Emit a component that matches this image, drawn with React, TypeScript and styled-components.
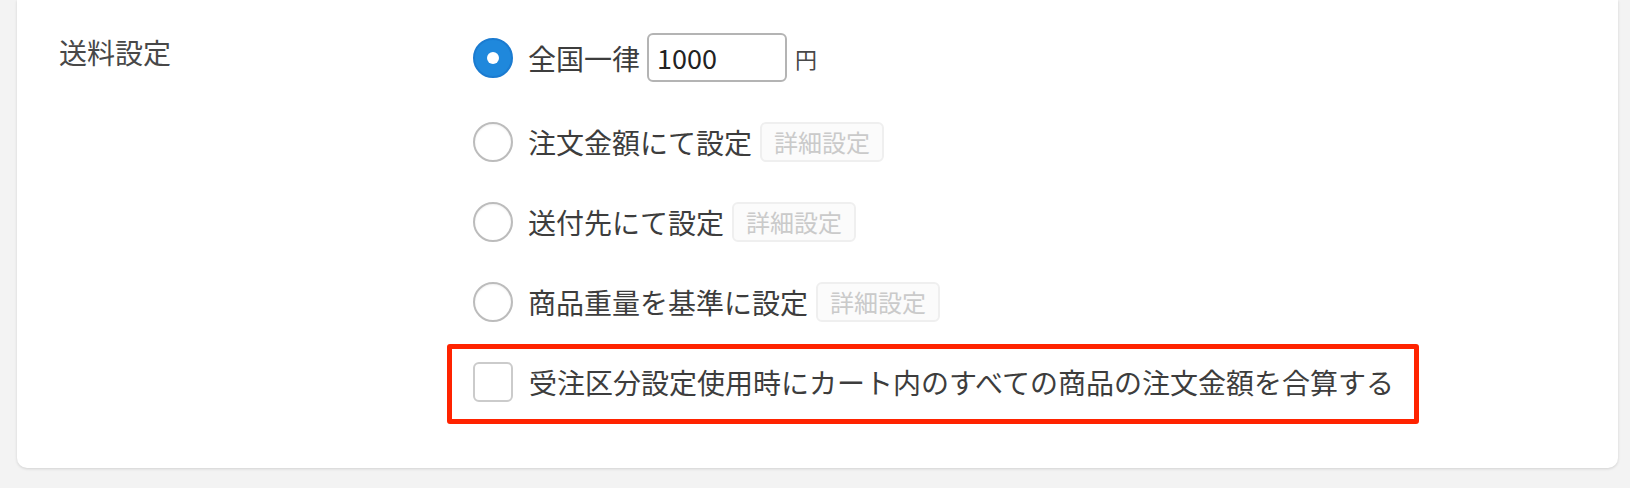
import React, {useState} from 'react';
import styled, {createGlobalStyle} from 'styled-components';

const GlobalStyle = createGlobalStyle`
  html, body {
    margin: 0;
    padding: 0;
    background: #f3f3f3;
  }
  body {
    font-family: "Noto Sans CJK JP", "Noto Sans", sans-serif;
    color: #3d3d3d;
  }
`;

type ShippingOption = {
  id: string;
  label: string;
  hasDetail: boolean;
};

const options: ShippingOption[] = [
  {id: 'flat', label: '全国一律', hasDetail: false},
  {id: 'amount', label: '注文金額にて設定', hasDetail: true},
  {id: 'destination', label: '送付先にて設定', hasDetail: true},
  {id: 'weight', label: '商品重量を基準に設定', hasDetail: true},
];

function App() {
  const [selected, setSelected] = useState<string>('flat');
  const [price, setPrice] = useState<string>('1000');
  const [combine, setCombine] = useState<boolean>(false);

  return (
    <>
      <GlobalStyle />
      <Page>
        <Card>
          <Label>送料設定</Label>
          <OptionList>
            {options.map((opt) => (
              <OptionRow key={opt.id} $tall={opt.id === 'flat'}>
                <Radio
                  $checked={selected === opt.id}
                  onClick={() => setSelected(opt.id)}
                />
                <OptionText onClick={() => setSelected(opt.id)}>
                  {opt.label}
                </OptionText>
                {opt.id === 'flat' && (
                  <>
                    <PriceInput
                      value={price}
                      onChange={(e) => setPrice(e.target.value)}
                    />
                    <Unit>円</Unit>
                  </>
                )}
                {opt.hasDetail && <DetailButton>詳細設定</DetailButton>}
              </OptionRow>
            ))}
            <CheckRow>
              <Checkbox $checked={combine} onClick={() => setCombine(!combine)} />
              <CheckText onClick={() => setCombine(!combine)}>
                受注区分設定使用時にカート内のすべての商品の注文金額を合算する
              </CheckText>
            </CheckRow>
          </OptionList>
        </Card>
      </Page>
    </>
  );
}

export default App;

const Page = styled.div`
  padding: 0 12px 20px 17px;
`;

const Card = styled.div`
  display: grid;
  grid-template-columns: 414px 1fr;
  background: #fff;
  border-radius: 0 0 10px 10px;
  box-shadow: 0 1px 3px rgba(0, 0, 0, 0.14);
  padding: 32px 0 66px 42px;
`;

const Label = styled.div`
  font-size: 28px;
  line-height: 40px;
  color: #484848;
`;

const OptionList = styled.div`
  display: flex;
  flex-direction: column;
  gap: 40px;
  padding-top: 1px;
`;

const OptionRow = styled.div<{$tall?: boolean}>`
  display: flex;
  align-items: center;
  height: ${(p) => (p.$tall ? '49px' : '40px')};
`;

const Radio = styled.span<{$checked: boolean}>`
  box-sizing: border-box;
  position: relative;
  width: 40px;
  height: 40px;
  flex-shrink: 0;
  border-radius: 50%;
  cursor: pointer;
  border: 2px solid ${(p) => (p.$checked ? '#1b7bd0' : '#bcbcbc')};
  background: ${(p) => (p.$checked ? '#1f88dc' : '#fff')};
  box-shadow: ${(p) => (p.$checked ? 'none' : 'inset 0 1px 2px rgba(0,0,0,0.06)')};

  &::after {
    content: '';
    display: ${(p) => (p.$checked ? 'block' : 'none')};
    position: absolute;
    left: 50%;
    top: 50%;
    width: 12px;
    height: 12px;
    margin: -6px 0 0 -6px;
    border-radius: 50%;
    background: #fff;
  }
`;

const OptionText = styled.span`
  margin-left: 15px;
  font-size: 28px;
  line-height: 40px;
  color: #3d3d3d;
  cursor: pointer;
  white-space: nowrap;
`;

const PriceInput = styled.input`
  box-sizing: border-box;
  width: 140px;
  height: 49px;
  margin-left: 7px;
  padding: 0 8px;
  border: 2px solid #b4b4b4;
  border-radius: 6px;
  font-family: "Noto Sans CJK JP", "Noto Sans", sans-serif;
  font-size: 27px;
  color: #222;
  outline: none;
`;

const Unit = styled.span`
  margin-left: 8px;
  font-size: 22px;
  color: #484848;
`;

const DetailButton = styled.button`
  box-sizing: border-box;
  height: 40px;
  margin-left: 8px;
  padding: 0 12px;
  border: 2px solid #efefef;
  border-radius: 6px;
  background: #fbfbfb;
  font-family: "Noto Sans CJK JP", "Noto Sans", sans-serif;
  font-size: 24px;
  line-height: 1;
  color: #cacaca;
  cursor: default;
`;

const CheckRow = styled.div`
  display: flex;
  align-items: center;
  align-self: flex-start;
  height: 40px;
  margin: -18px 0 -22px -26px;
  padding: 13px 20px 17px 21px;
  border: 5px solid #ff2300;
  border-radius: 3px;
`;

const Checkbox = styled.span<{$checked: boolean}>`
  box-sizing: border-box;
  width: 40px;
  height: 40px;
  flex-shrink: 0;
  border: 2px solid #cbcbcb;
  border-radius: 6px;
  background: ${(p) => (p.$checked ? '#1f88dc' : '#fff')};
  cursor: pointer;
`;

const CheckText = styled.span`
  margin-left: 16px;
  font-size: 28px;
  line-height: 40px;
  color: #3d3d3d;
  white-space: nowrap;
  cursor: pointer;
`;
